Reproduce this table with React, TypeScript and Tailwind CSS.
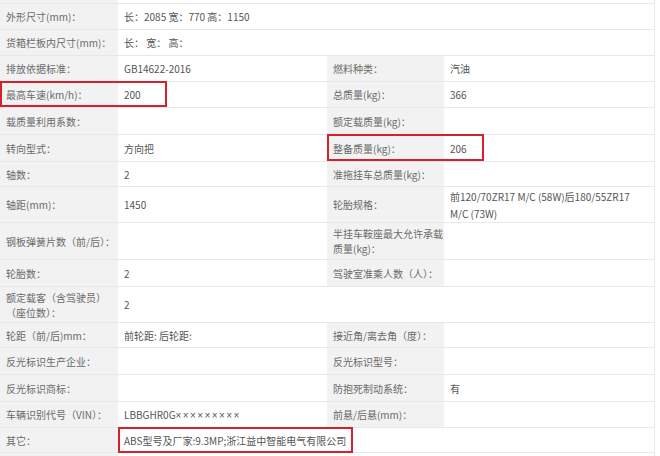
import React from "react";

type Row = {
  h: number;
  l1: React.ReactNode;
  v1: React.ReactNode;
  l2?: React.ReactNode | null;
  v2?: React.ReactNode;
  span?: boolean;
};

const rows: Row[] = [
  { h: 26, l1: "外形尺寸(mm)：", v1: "长：2085 宽：770 高：1150", span: true },
  { h: 26, l1: "货箱栏板内尺寸(mm)：", v1: "长： 宽： 高：", span: true },
  { h: 26, l1: "排放依据标准：", v1: "GB14622-2016", l2: "燃料种类：", v2: "汽油" },
  { h: 26, l1: "最高车速(km/h)：", v1: "200", l2: "总质量(kg)：", v2: "366" },
  { h: 27, l1: "载质量利用系数：", v1: "", l2: "额定载质量(kg)：", v2: "" },
  { h: 27, l1: "转向型式：", v1: "方向把", l2: "整备质量(kg)：", v2: "206" },
  { h: 25, l1: "轴数：", v1: "2", l2: "准拖挂车总质量(kg)：", v2: "" },
  {
    h: 36,
    l1: "轴距(mm)：",
    v1: "1450",
    l2: "轮胎规格：",
    v2: (
      <span className="leading-[17px]">
        前120/70ZR17 M/C (58W)后180/55ZR17
        <br />
        M/C (73W)
      </span>
    ),
  },
  {
    h: 37,
    l1: "钢板弹簧片数（前/后）：",
    v1: "",
    l2: (
      <span>
        半挂车鞍座最大允许承载
        <br />
        质量(kg)：
      </span>
    ),
    v2: "",
  },
  { h: 27, l1: "轮胎数：", v1: "2", l2: "驾驶室准乘人数（人）：", v2: "" },
  {
    h: 36,
    l1: (
      <span>
        额定载客（含驾驶员）
        <br />
        （座位数）：
      </span>
    ),
    v1: "2",
    l2: null,
    v2: "",
  },
  { h: 25, l1: "轮距（前/后)mm：", v1: "前轮距: 后轮距:", l2: "接近角/离去角（度）：", v2: "" },
  { h: 27, l1: "反光标识生产企业：", v1: "", l2: "反光标识型号：", v2: "" },
  { h: 27, l1: "反光标识商标：", v1: "", l2: "防抱死制动系统：", v2: "有" },
  {
    h: 26,
    l1: "车辆识别代号（VIN）：",
    v1: (
      <span>
        LBBGHR0G
        <span className="font-['Liberation_Sans',sans-serif] tracking-[1.4px]">×××××××××</span>
      </span>
    ),
    l2: "前悬/后悬(mm)：",
    v2: "",
  },
  { h: 25, l1: "其它：", v1: "ABS型号及厂家:9.3MP;浙江益中智能电气有限公司", span: true },
];

const base = "flex items-center px-[6px] border-b border-[#e8e8e8] whitespace-nowrap leading-[15px]";
const label = `${base} bg-[#f2f2f2] text-[#6a6a6a]`;
const value = `${base} bg-white text-[#555555]`;

export default function App() {
  return (
    <div className="relative w-[660px] h-[456px] overflow-hidden bg-white font-['Noto_Sans_CJK_SC',sans-serif] text-[10px]">
      <div className="grid grid-cols-[118px_209px_117px_211px]">
        {/* tail of the row above */}
        <div className="h-[4px] bg-[#f2f2f2] border-b border-[#e8e8e8]" />
        <div className="h-[4px] col-span-3 border-b border-r border-[#e8e8e8]" />

        {rows.map((r, i) => (
          <React.Fragment key={i}>
            <div className={label} style={{ height: r.h }}>
              {r.l1}
            </div>
            {r.span ? (
              <div className={`${value} col-span-3 border-r`} style={{ height: r.h }}>
                {r.v1}
              </div>
            ) : (
              <>
                <div className={value} style={{ height: r.h }}>
                  {r.v1}
                </div>
                <div className={r.l2 === null ? value : label} style={{ height: r.h }}>
                  {r.l2}
                </div>
                <div className={`${value} border-r`} style={{ height: r.h }}>
                  {r.v2}
                </div>
              </>
            )}
          </React.Fragment>
        ))}

        <div className="h-[3px] bg-[#f2f2f2]" />
        <div className="h-[3px] col-span-3 border-r border-[#e8e8e8]" />
      </div>

      {/* highlight boxes */}
      <div className="pointer-events-none absolute left-0 top-[81px] w-[167px] h-[26px] border-2 border-[#d4212b]" />
      <div className="pointer-events-none absolute left-[327px] top-[134px] w-[157px] h-[27px] border-2 border-[#d4212b]" />
      <div className="pointer-events-none absolute left-[118px] top-[427px] w-[235px] h-[26px] border-2 border-[#d4212b]" />
    </div>
  );
}
